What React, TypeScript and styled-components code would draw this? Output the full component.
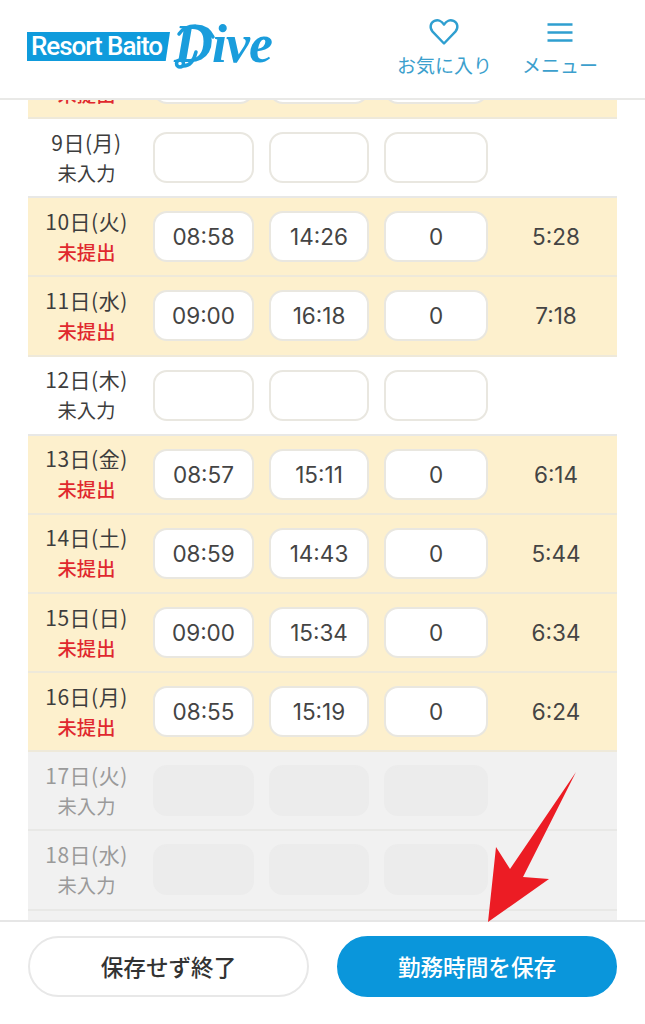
import React from "react";
import styled, { createGlobalStyle } from "styled-components";

const Global = createGlobalStyle`
  html, body { margin: 0; padding: 0; background: #fff; }
  body { font-family: "Noto Sans CJK JP", "Noto Sans", sans-serif; color: #333; }
`;

const Page = styled.div`
  position: relative;
  width: 645px;
  height: 1024px;
  display: flex;
  flex-direction: column;
  overflow: hidden;
  background: #fff;
`;

const Header = styled.header`
  flex: 0 0 100px;
  box-sizing: border-box;
  border-bottom: 2px solid #e9e9e7;
  padding: 0 47px 0 27px;
  display: flex;
  align-items: center;
  justify-content: space-between;
  background: #fff;
`;

const Logo = styled.div`
  position: relative;
  display: flex;
  align-items: center;
  margin-top: -5px;
`;

const Banner = styled.div`
  width: 143px;
  height: 29px;
  box-sizing: border-box;
  padding-left: 4px;
  background: #0f9bdc;
  clip-path: polygon(0 0, 100% 0, 97% 100%, 0 100%);
  color: #fff;
  font-family: "Roboto", sans-serif;
  font-size: 26px;
  font-weight: 500;
  line-height: 29px;
  letter-spacing: -1.05px;
  white-space: nowrap;
`;

const Script = styled.div`
  margin: 0 0 6px 4px;
  color: #1a9ddc;
  font-family: "Liberation Serif", serif;
  font-style: italic;
  font-weight: 700;
  font-size: 54px;
  line-height: 50px;
  letter-spacing: -1px;
`;

const Swash = styled.svg`
  position: absolute;
  left: 145px;
  top: 3px;
  width: 60px;
  height: 52px;
`;

const Nav = styled.nav`
  display: flex;
  align-items: flex-start;
  gap: 30px;
  margin-top: -3px;
`;

const NavItem = styled.div`
  display: flex;
  flex-direction: column;
  align-items: center;
  color: #3c9fcd;
  font-size: 19px;
  line-height: 26px;
  gap: 5px;
`;

const NavIcon = styled.svg`
  width: 32px;
  height: 30px;
  display: block;
`;

const Scroller = styled.main`
  flex: 1;
  min-height: 0;
  overflow: hidden;
  padding: 0 28px;
`;

const List = styled.div`
  margin-top: -60px;
`;

const Row = styled.div<{ $kind: "todo" | "empty" | "off" }>`
  height: 79.15px;
  box-sizing: border-box;
  display: grid;
  grid-template-columns: 110px 101px 100px 104px 1fr;
  column-gap: 15px;
  align-items: center;
  background: ${(p) => (p.$kind === "todo" ? "#fdf0cd" : p.$kind === "off" ? "#f1f1f1" : "#fff")};
  border-bottom: 2px solid ${(p) => (p.$kind === "todo" ? "#eee9da" : "#e8e8e6")};
`;

const DateCell = styled.div`
  margin-right: -7px;
  text-align: center;
  font-size: 21px;
  line-height: 31px;
`;

const Day = styled.div<{ $off: boolean }>`
  color: ${(p) => (p.$off ? "#9a9a9a" : "#3d3d3d")};
  letter-spacing: 0.5px;
  white-space: nowrap;
`;

const Status = styled.div<{ $kind: "todo" | "empty" | "off" }>`
  font-size: 19.3px;
  font-weight: ${(p) => (p.$kind === "todo" ? 500 : 400)};
  color: ${(p) => (p.$kind === "todo" ? "#e0282e" : p.$kind === "off" ? "#9a9a9a" : "#3d3d3d")};
`;

const Field = styled.div<{ $off: boolean }>`
  height: 51px;
  box-sizing: border-box;
  border-radius: 14px;
  border: 2px solid ${(p) => (p.$off ? "#ececec" : "#e9e7e0")};
  background: ${(p) => (p.$off ? "#ececec" : "#fff")};
  display: flex;
  align-items: center;
  justify-content: center;
  font-family: "Inter", "Noto Sans", sans-serif;
  font-size: 22.5px;
  color: #444;
`;

const Total = styled.div`
  margin-left: -8px;
  text-align: center;
  font-family: "Inter", "Noto Sans", sans-serif;
  font-size: 22.5px;
  color: #444;
`;

const Footer = styled.footer`
  flex: 0 0 104px;
  box-sizing: border-box;
  border-top: 2px solid #e6e6e6;
  padding: 14px 28px 0;
  display: grid;
  grid-template-columns: 281px 280px;
  column-gap: 28px;
  align-items: start;
  background: #fff;
`;

const Button = styled.button<{ $primary?: boolean }>`
  height: 61px;
  border-radius: 31px;
  box-sizing: border-box;
  border: 2px solid ${(p) => (p.$primary ? "#0a96db" : "#e8e8e8")};
  background: ${(p) => (p.$primary ? "#0a96db" : "#fff")};
  color: ${(p) => (p.$primary ? "#fff" : "#333")};
  font-family: inherit;
  font-size: 22.6px;
  font-weight: 500;
  padding: 0;
`;

const Arrow = styled.svg`
  position: absolute;
  left: 0;
  top: 0;
  width: 645px;
  height: 1024px;
  pointer-events: none;
`;

type Kind = "todo" | "empty" | "off";
type RowData = { day: string; kind: Kind; vals?: [string, string, string]; total?: string };

const rows: RowData[] = [
  { day: "8日(日)", kind: "todo" },
  { day: "9日(月)", kind: "empty" },
  { day: "10日(火)", kind: "todo", vals: ["08:58", "14:26", "0"], total: "5:28" },
  { day: "11日(水)", kind: "todo", vals: ["09:00", "16:18", "0"], total: "7:18" },
  { day: "12日(木)", kind: "empty" },
  { day: "13日(金)", kind: "todo", vals: ["08:57", "15:11", "0"], total: "6:14" },
  { day: "14日(土)", kind: "todo", vals: ["08:59", "14:43", "0"], total: "5:44" },
  { day: "15日(日)", kind: "todo", vals: ["09:00", "15:34", "0"], total: "6:34" },
  { day: "16日(月)", kind: "todo", vals: ["08:55", "15:19", "0"], total: "6:24" },
  { day: "17日(火)", kind: "off" },
  { day: "18日(水)", kind: "off" },
  { day: "19日(木)", kind: "off" },
];

export default function App() {
  return (
    <Page>
      <Global />
      <Header>
        <Logo>
          <Banner>Resort Baito</Banner>
          <Script>Dive</Script>
          <Swash viewBox="0 0 60 52" fill="none" stroke="#1a9ddc" strokeWidth="3.5" strokeLinecap="round">
            <path d="M7 12 C14 2 34 0 41 15" />
            <circle cx="8" cy="41.5" r="3.5" />
            <path d="M11.5 44 C18 44 22 38 24 30" />
          </Swash>
        </Logo>
        <Nav>
          <NavItem>
            <NavIcon viewBox="0 0 32 30" fill="none" stroke="#2f9fd0" strokeWidth="2.4" strokeLinejoin="round">
              <path d="M16 26.5 L4.6 14.6 C1.4 11 2.2 5.6 6.4 3.9 C10 2.4 13.8 3.8 16 7.6 C18.2 3.8 22 2.4 25.6 3.9 C29.8 5.6 30.6 11 27.4 14.6 Z" />
            </NavIcon>
            お気に入り
          </NavItem>
          <NavItem>
            <NavIcon viewBox="0 0 32 30" fill="none" stroke="#2f9fd0" strokeWidth="2.6">
              <path d="M3.5 7.5 H28.5 M3.5 15.5 H28.5 M3.5 23.5 H28.5" />
            </NavIcon>
            メニュー
          </NavItem>
        </Nav>
      </Header>
      <Scroller>
        <List>
          {rows.map((r) => (
            <Row key={r.day} $kind={r.kind}>
              <DateCell>
                <Day $off={r.kind === "off"}>{r.day}</Day>
                <Status $kind={r.kind}>{r.kind === "todo" ? "未提出" : "未入力"}</Status>
              </DateCell>
              {[0, 1, 2].map((i) => (
                <Field key={i} $off={r.kind === "off"}>
                  {r.vals ? r.vals[i] : ""}
                </Field>
              ))}
              <Total>{r.total ?? ""}</Total>
            </Row>
          ))}
        </List>
      </Scroller>
      <Footer>
        <Button>保存せず終了</Button>
        <Button $primary>勤務時間を保存</Button>
      </Footer>
      <Arrow viewBox="0 0 645 1024">
        <polygon points="576,772 523,877 549,879 488,922 496,847 510,869" fill="#ec1c24" />
      </Arrow>
    </Page>
  );
}
